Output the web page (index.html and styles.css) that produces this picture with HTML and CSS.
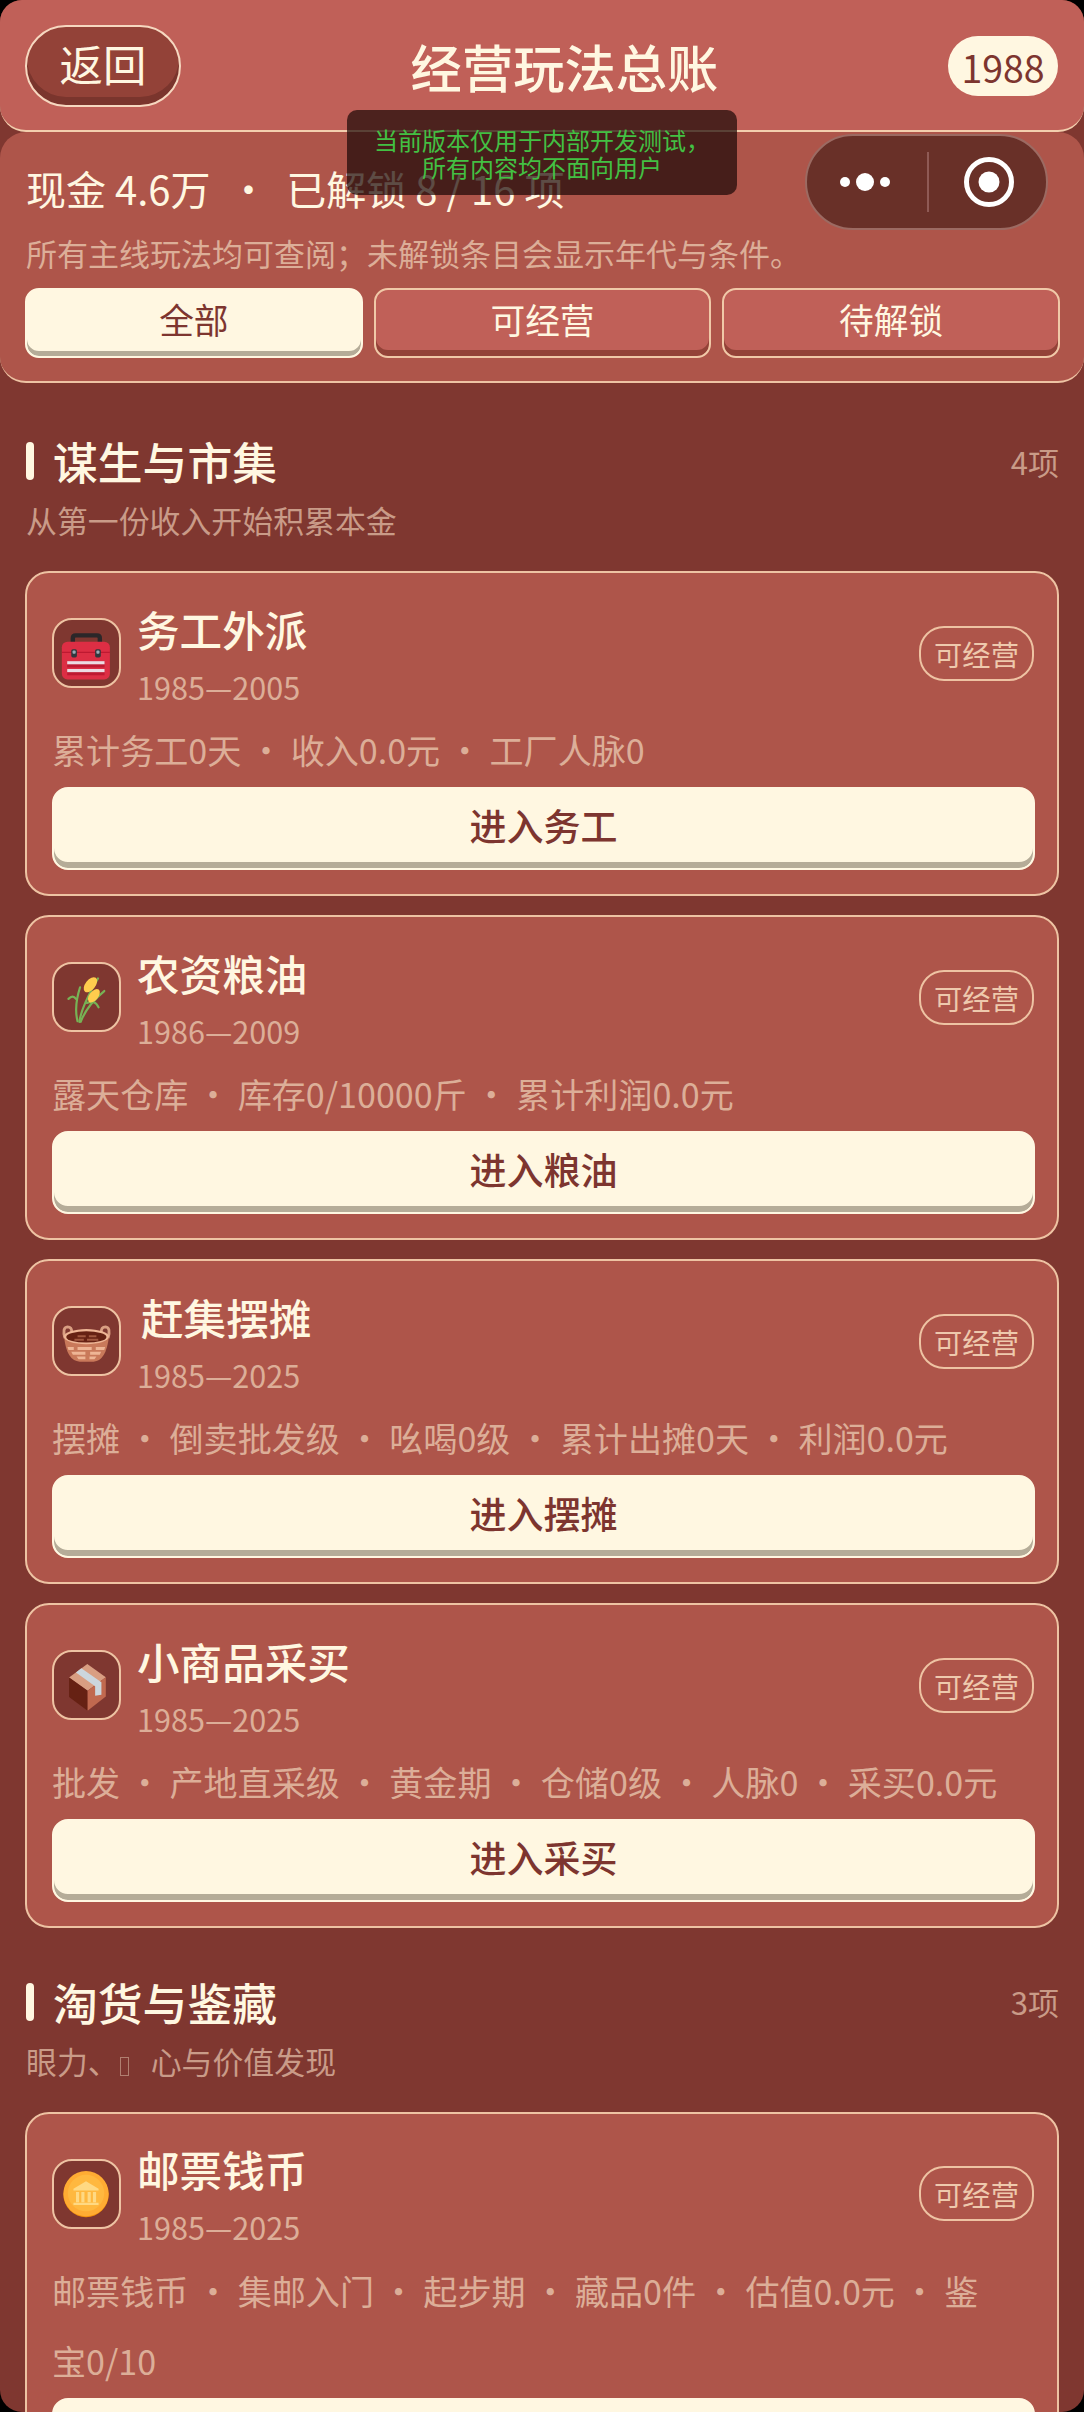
FILE: index.html
```html
<!DOCTYPE html>
<html lang="zh-CN">
<head>
<meta charset="utf-8">
<title>经营玩法总账</title>
<link rel="stylesheet" href="styles.css">
</head>
<body>
<div class="screen">
  <header class="topbar">
    <button class="back"><span>返回</span></button>
    <h1 class="page-title">经营玩法总账</h1>
    <div class="year">1988</div>
  </header>
  <section class="summary">
    <div class="summary-main">现金 4.6万 &nbsp;·&nbsp; 已解锁 8 / 16 项</div>
    <div class="summary-sub">所有主线玩法均可查阅；未解锁条目会显示年代与条件。</div>
    <div class="tabs">
      <div class="tab tab-active">全部</div>
      <div class="tab">可经营</div>
      <div class="tab">待解锁</div>
    </div>
  </section>

  <main class="content">
    <section class="group">
      <div class="group-head">
        <div class="group-title"><i class="bar"></i><h2>谋生与市集</h2></div>
        <span class="group-count">4项</span>
      </div>
      <p class="group-sub">从第一份收入开始积累本金</p>

      <article class="card">
        <div class="card-head">
          <div class="icon">
            <svg viewBox="65 57 207 208"><path d="M125 128v-14q0-9 9-9h68q9 0 9 9v14" fill="none" stroke="#2b2729" stroke-width="14"/><rect x="90" y="125" width="153" height="120" rx="18" fill="#dd2e44"/><rect x="90" y="157" width="153" height="4" fill="#be1931"/><rect x="120" y="149" width="18" height="26" rx="5" fill="#31373d"/><rect x="124" y="153" width="10" height="10" rx="3" fill="#99aab5"/><rect x="196" y="149" width="18" height="26" rx="5" fill="#31373d"/><rect x="200" y="153" width="10" height="10" rx="3" fill="#99aab5"/><rect x="107" y="187" width="119" height="20" fill="#be1931"/><rect x="107" y="187" width="119" height="10" fill="#ecdbe3"/><rect x="107" y="212" width="119" height="20" fill="#be1931"/><rect x="107" y="212" width="119" height="10" fill="#ecdbe3"/></svg>
          </div>
          <div class="card-titles"><h3>务工外派</h3><div class="years">1985—2005</div></div>
          <span class="chip">可经营</span>
        </div>
        <p class="desc">累计务工0天 · 收入0.0元 · 工厂人脉0</p>
        <div class="enter">进入务工</div>
      </article>

      <article class="card">
        <div class="card-head">
          <div class="icon">
            <svg viewBox="65 55 207 208"><g fill="none" stroke="#77b255" stroke-width="7" stroke-linecap="round"><path d="M111 165q14-14 24 0"/><path d="M140 236q-12-46 8-108"/><path d="M146 238q6-48 59-138"/><path d="M150 238q20-53 75-98"/><path d="M170 178q25-12 37 14"/></g><ellipse cx="181" cy="120" rx="28" ry="16" transform="rotate(-52 181 120)" fill="#ffcc4d"/><ellipse cx="192" cy="155" rx="25" ry="14" transform="rotate(-52 192 155)" fill="#ffcc4d"/></svg>
          </div>
          <div class="card-titles"><h3>农资粮油</h3><div class="years">1986—2009</div></div>
          <span class="chip">可经营</span>
        </div>
        <p class="desc">露天仓库 · 库存0/10000斤 · 累计利润0.0元</p>
        <div class="enter">进入粮油</div>
      </article>

      <article class="card">
        <div class="card-head">
          <div class="icon">
            <svg viewBox="65 55 207 208"><g fill="none" stroke="#d99e82" stroke-width="9"><path d="M100 150q-10-34 8-36 14 0 14 18"/><path d="M237 150q10-34-8-36-14 0-14 18"/></g><path d="M97 145q8 78 50 80h44q40-2 49-80z" fill="#c9795a"/><path d="M108 178h20v10h-17zM140 178h45v10h-45zM198 178h30l-3 10h-27zM120 193h45v10h-40zM180 193h35l-4 10h-31zM137 208h28v9h-22zM178 208h22l-6 9h-16z" fill="#eeb595"/><ellipse cx="168" cy="145" rx="72" ry="24" fill="#eeb595"/><ellipse cx="168" cy="146" rx="64" ry="18" fill="#662113"/><path d="M130 152h30v6h-30zM170 152h36v6h-36zM140 141h26v6h-26zM176 141h24v6h-24z" fill="#a0573f"/></svg>
          </div>
          <div class="card-titles"><h3 class="title-shift">赶集摆摊</h3><div class="years">1985—2025</div></div>
          <span class="chip">可经营</span>
        </div>
        <p class="desc">摆摊 · 倒卖批发级 · 吆喝0级 · 累计出摊0天 · 利润0.0元</p>
        <div class="enter">进入摆摊</div>
      </article>

      <article class="card">
        <div class="card-head">
          <div class="icon">
            <svg viewBox="65 68 207 208"><path d="M171 105l59 42-58 43-59-42z" fill="#d99e82"/><path d="M113 148l59 42v64l-59-44z" fill="#662113"/><path d="M172 190l58-43v62l-58 45z" fill="#c1694f"/><path d="M135 132l17-13 64 44v40l-20 3v-30z" fill="#ccd6dd"/></svg>
          </div>
          <div class="card-titles"><h3>小商品采买</h3><div class="years">1985—2025</div></div>
          <span class="chip">可经营</span>
        </div>
        <p class="desc">批发 · 产地直采级 · 黄金期 · 仓储0级 · 人脉0 · 采买0.0元</p>
        <div class="enter">进入采买</div>
      </article>
    </section>

    <section class="group">
      <div class="group-head">
        <div class="group-title"><i class="bar"></i><h2>淘货与鉴藏</h2></div>
        <span class="group-count">3项</span>
      </div>
      <p class="group-sub">眼力、<i class="tofu"></i>心与价值发现</p>

      <article class="card">
        <div class="card-head">
          <div class="icon">
            <svg viewBox="65 62 207 208"><circle cx="167" cy="168" r="72" fill="#f4900c"/><circle cx="167" cy="165" r="72" fill="#ffac33"/><circle cx="167" cy="163" r="58" fill="#ffb83f"/><path d="M167 125l40 24v6h-80v-6z" fill="#ffd983"/><path d="M135 160h10v32h-10zM152 160h10v32h-10zM172 160h10v32h-10zM189 160h10v32h-10zM127 194h80v7h-80z" fill="#ffd983"/></svg>
          </div>
          <div class="card-titles"><h3>邮票钱币</h3><div class="years">1985—2025</div></div>
          <span class="chip">可经营</span>
        </div>
        <p class="desc">邮票钱币 · 集邮入门 · 起步期 · 藏品0件 · 估值0.0元 · 鉴宝0/10</p>
        <div class="enter">进入钱币</div>
      </article>
    </section>
  </main>

  <div class="capsule">
    <svg class="cap-dots" viewBox="0 0 60 20"><circle cx="10" cy="10" r="5"/><circle cx="30" cy="10" r="9"/><circle cx="50" cy="10" r="5"/></svg>
    <i class="cap-line"></i>
    <svg class="cap-rec" viewBox="0 0 50 50"><circle cx="25" cy="25" r="22.5" fill="none" stroke="#fff" stroke-width="5"/><circle cx="25" cy="25" r="10.5" fill="#fff"/></svg>
  </div>
  <div class="toast">当前版本仅用于内部开发测试，<br>所有内容均不面向用户</div>
</div>
</body>
</html>
```

FILE: styles.css
```css
* { box-sizing: border-box; }
html { background: #000; height: 100%; }
body {
  margin: 0;
  height: 100vh;
  overflow: hidden;
  font-family: "Noto Sans CJK SC", "Noto Sans", sans-serif;
}
h1, h2, h3, p { margin: 0; font-weight: inherit; }
.screen {
  position: relative;
  height: 100%;
  overflow: hidden;
  border-radius: 22px;
  background: #7f3730;
  color: #fff7e1;
}
.topbar {
  position: relative;
  z-index: 1;
  height: 132px;
  padding: 25px 26px 0 25px;
  display: flex;
  align-items: flex-start;
  justify-content: space-between;
  background: #c06058;
  border-bottom: 2px solid #f3cfae;
  border-radius: 0 0 26px 26px;
}
.back {
  width: 156px;
  height: 82px;
  padding: 0 0 4px;
  font: 400 43.4px/1 "Noto Sans CJK SC", sans-serif;
  color: #fff7e1;
  background: #934238;
  border: 2px solid #f6d8c0;
  border-radius: 41px;
  box-shadow: inset 0 -8px 0 #7a352d;
}
.page-title {
  flex: 1;
  padding: 12px 0 0 0;
  text-align: center;
  font-size: 51.3px;
  line-height: 58px;
  font-weight: 500;
}
.year {
  margin-top: 11px;
  width: 110px;
  height: 60px;
  border-radius: 30px;
  background: #fff7e1;
  color: #7d352f;
  font-size: 37.5px;
  line-height: 62px;
  text-align: center;
}
.summary {
  height: 251px;
  padding: 32.5px 24px 0 26px;
  background: #ae554a;
  border-bottom: 2px solid #eec3a3;
  border-radius: 26px;
}
.summary-main { font-size: 40px; line-height: 46px; }
.summary-sub {
  margin-top: 20px;
  font-size: 31px;
  line-height: 44px;
  color: #dcae98;
}
.tabs {
  margin: 13px 0 0 -1px;
  display: grid;
  grid-template-columns: repeat(3, 1fr);
  gap: 11px;
}
.tab {
  height: 70px;
  padding-bottom: 6px;
  text-align: center;
  font-size: 34.7px;
  line-height: 58px;
  background: #c06058;
  border: 2px solid #f0c9a8;
  border-radius: 14px;
  box-shadow: inset 0 -6px 0 #934238;
}
.tab-active {
  background: #fff7e1;
  color: #7d352f;
  border-color: #fff7e1;
  box-shadow: inset 0 -5px 0 #b5ac98;
}
.content { padding: 0 25px; }
.group { padding-top: 52px; }
.group + .group { padding-top: 47.5px; }
.group-head {
  display: flex;
  justify-content: space-between;
  align-items: center;
  height: 52px;
}
.group-title { display: flex; align-items: center; gap: 19px; }
.bar { width: 8px; height: 38px; margin-left: 1px; border-radius: 4px; background: #fff7e1; }
.group-title h2 { font-size: 44.8px; line-height: 52px; font-weight: 500; }
.group-count { font-size: 31px; color: #c99b88; }
.group-sub {
  margin-top: 10px;
  padding-left: 1px;
  font-size: 30.9px;
  line-height: 46px;
  color: #c99b88;
}
.tofu {
  display: inline-block;
  width: 9px;
  height: 19px;
  margin: 0 22px 0 1px;
  vertical-align: -2px;
  border: 1px solid #b07f70;
}
.card {
  margin-top: 19px;
  padding: 0 22px 24px 25px;
  background: #ae554a;
  border: 2px solid #eec3a3;
  border-radius: 24px;
}
.group-sub + .card { margin-top: 28px; }
.card-head {
  display: flex;
  align-items: center;
  height: 141px;
  padding-top: 19px;
}
.icon {
  flex: none;
  width: 69px;
  height: 70px;
  border: 2px solid #eec3a3;
  border-radius: 20px;
  background: #7f3730;
  overflow: hidden;
}
.icon svg { display: block; width: 65px; height: 66px; }
.card-titles { flex: 1; padding-left: 16px; padding-top: 2px; }
.card-titles h3 { font-size: 42.6px; line-height: 60px; font-weight: 500; }
.card-titles .title-shift { padding-left: 4px; }
.years { font-size: 30.6px; line-height: 46px; margin-top: 5px; color: #dcae98; }
.chip {
  flex: none;
  width: 115px;
  height: 55px;
  margin-right: 1px;
  border: 2px solid #eec3a3;
  border-radius: 25px;
  text-align: center;
  font-size: 28.3px;
  line-height: 52px;
  color: #eec9ad;
}
.desc {
  margin-bottom: 3px;
  padding-right: 28px;
  font-size: 34.1px;
  line-height: 70px;
  color: #dcae98;
}
.enter {
  height: 83px;
  border: 2px solid #fff7e1;
  border-radius: 16px;
  background: #fff7e1;
  color: #7d352f;
  text-align: center;
  font-size: 37px;
  line-height: 72px;
  font-weight: 500;
  box-shadow: inset 0 -6px 0 #b5ac98;
}
.capsule {
  position: absolute;
  z-index: 3;
  left: 805px;
  top: 134px;
  width: 243px;
  height: 96px;
  display: flex;
  align-items: center;
  background: #693028;
  border: 2px solid #9c6a62;
  border-radius: 48px;
}
.cap-dots { width: 60px; height: 20px; margin-left: 28px; fill: #fff; }
.cap-line { width: 2px; height: 60px; margin-left: 32px; background: #8f5a55; }
.cap-rec { width: 50px; height: 50px; margin-left: 35px; }
.toast {
  position: absolute;
  z-index: 2;
  left: 347px;
  top: 110px;
  width: 390px;
  height: 85px;
  padding-top: 16px;
  border-radius: 10px;
  background: rgba(30, 10, 8, 0.72);
  color: #43c043;
  text-align: center;
  font-size: 24px;
  line-height: 27px;
}
```
